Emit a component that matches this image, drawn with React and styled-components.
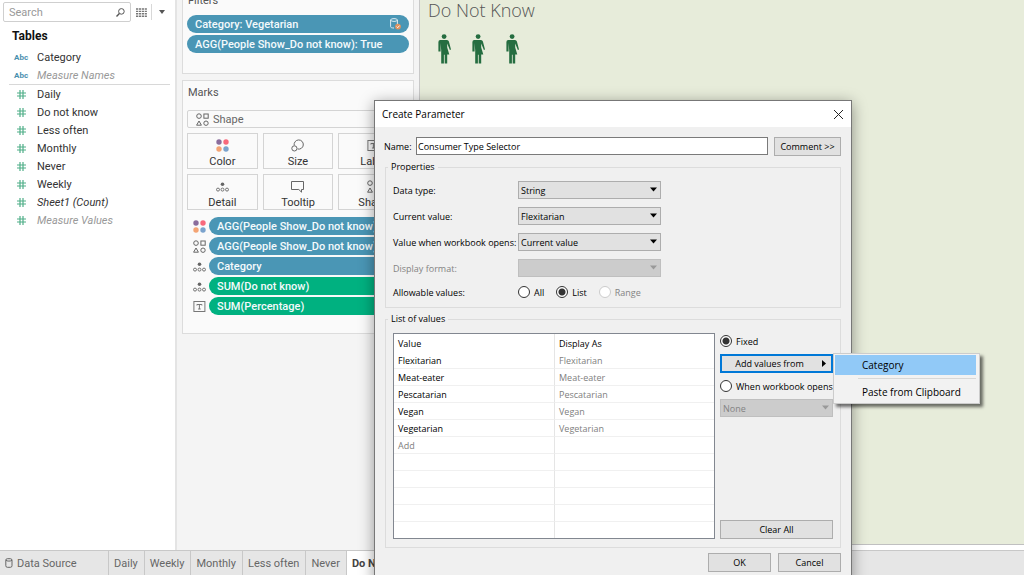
import React from "react";
import styled, { createGlobalStyle } from "styled-components";

const FONTS = {
  APP: 'Roboto, "Liberation Sans", sans-serif',
  SYSTEM: '"Open Sans", "Noto Sans", sans-serif',
};

const COLORS = {
  BLUE: "#4a96b5",
  GREEN: "#00b180",
  CANVAS: "#e7ecda",
  DIALOG: "#f0f0f0",
};

const GlobalStyle = createGlobalStyle`
  * {
    box-sizing: border-box;
  }
  body {
    margin: 0;
    overflow: hidden;
    font-family: ${FONTS.APP};
    font-size: 11px;
    color: #333;
  }
  button, input, select {
    margin: 0;
    font: inherit;
    color: inherit;
  }
`;

const Page = styled.div`
  position: relative;
  display: flex;
  flex-direction: column;
  height: 100vh;
  overflow: hidden;
`;

const Workspace = styled.div`
  display: flex;
  flex: 1;
  min-height: 0;
`;

/* data pane */

const DataPane = styled.aside`
  width: 177px;
  flex-shrink: 0;
  border-right: 2px solid #e4e4e4;
  background: #fff;
`;

const SearchRow = styled.div`
  display: flex;
  align-items: center;
  height: 24px;
  padding-left: 3px;
`;

const SearchBox = styled.label`
  display: flex;
  align-items: center;
  width: 128px;
  height: 20px;
  padding: 0 5px;
  border: 1px solid #cfcfcf;
  border-radius: 2px;
`;

const SearchInput = styled.input`
  flex: 1;
  min-width: 0;
  padding: 0;
  border: 0;
  outline: 0;
  background: none;
  &::placeholder {
    color: #999;
    opacity: 1;
  }
`;

const ToolButton = styled.button`
  display: flex;
  align-items: center;
  justify-content: center;
  width: 20px;
  height: 16px;
  padding: 0;
  border: 0;
  background: none;
  & + & {
    border-left: 1px solid #d8d8d8;
  }
`;

const PaneTitle = styled.h2`
  margin: 0;
  padding: 4px 12px;
  font-size: 12px;
  line-height: 16px;
  color: #111;
`;

const FieldList = styled.ul`
  margin: 0 5px 0 9px;
  padding: 0;
  list-style: none;
  & + & {
    border-top: 1px solid #d8d8d8;
  }
`;

const Field = styled.li`
  display: flex;
  align-items: center;
  height: 18px;
  color: ${({ $muted }) => ($muted ? "#999" : "#333")};
  font-style: ${({ $italic }) => ($italic ? "italic" : "normal")};
`;

const FieldType = styled.span`
  display: flex;
  width: 28px;
  padding-left: ${({ $text }) => ($text ? 5 : 8)}px;
  font-size: 8px;
  font-weight: 700;
  font-style: normal;
  color: #4a8fae;
`;

/* shelves */

const Shelves = styled.section`
  display: flex;
  flex-direction: column;
  gap: 6px;
  width: 242px;
  flex-shrink: 0;
  margin-top: -12px;
  padding: 0 5px;
  background: #f4f4f4;
`;

const Card = styled.div`
  padding: 4px;
  border: 1px solid #dcdcdc;
  background: #fafafa;
`;

const FilterCard = styled(Card)`
  height: 86px;
`;

const MarksCard = styled(Card)`
  height: 254px;
`;

const CardTitle = styled.h3`
  margin: 0;
  padding: 0 1px;
  font-size: 11px;
  font-weight: 400;
  line-height: 16px;
  color: #555;
`;

const MarksTitle = styled(CardTitle)`
  padding-bottom: 9px;
`;

const PillList = styled.div`
  display: flex;
  flex-direction: column;
  gap: 2px;
  padding-top: 6px;
`;

const PillRow = styled.div`
  display: grid;
  grid-template-columns: 22px 1fr;
  align-items: center;
`;

const PillIcon = styled.span`
  display: flex;
  padding-left: 6px;
`;

const Pill = styled.div`
  display: flex;
  align-items: center;
  justify-content: space-between;
  height: 18px;
  padding: 0 8px;
  border-radius: 9px;
  background: ${({ $color }) => $color};
  font-weight: 500;
  color: #f4fafc;
  white-space: nowrap;
`;

const MarkType = styled.label`
  display: flex;
  align-items: center;
  gap: 4px;
  height: 18px;
  margin-bottom: 5px;
  padding-left: 8px;
  border: 1px solid #d4d4d4;
  border-radius: 2px;
`;

const MarkSelect = styled.select`
  flex: 1;
  padding: 0;
  border: 0;
  appearance: none;
  background: none;
  color: #666;
`;

const MarkGrid = styled.div`
  display: grid;
  grid-template-columns: repeat(3, 1fr);
  gap: 5px;
  padding-bottom: 1px;
`;

const MarkButton = styled.button`
  display: flex;
  flex-direction: column;
  align-items: center;
  justify-content: space-between;
  height: 36px;
  padding: 5px 0 0;
  border: 1px solid #d4d4d4;
  background: #fafafa;
  line-height: 13px;
`;

/* canvas */

const Canvas = styled.main`
  flex: 1;
  margin-bottom: 5px;
  padding: 0 8px;
  border-left: 1px solid #c8c8c8;
  border-bottom: 1px solid #c0c0c0;
  background: ${COLORS.CANVAS};
`;

const CanvasTitle = styled.h1`
  margin: 0;
  font-family: ${FONTS.SYSTEM};
  font-size: 18px;
  font-weight: 300;
  line-height: 20px;
  color: #555;
`;

const People = styled.div`
  display: flex;
  gap: 20px;
  padding: 14px 10px;
`;

/* sheet tabs */

const TabBar = styled.nav`
  display: flex;
  height: 25px;
  border-top: 1px solid #c8c8c8;
  background: #e6e6e6;
`;

const Tab = styled.a`
  display: flex;
  align-items: center;
  gap: 4px;
  padding: 0 6px 0 5px;
  border-right: 1px solid #c8c8c8;
  background: ${({ $active }) => ($active ? "#fff" : "transparent")};
  font-weight: ${({ $active }) => ($active ? 700 : 400)};
  color: ${({ $active }) => ($active ? "#444" : "#666")};
  text-decoration: none;
  white-space: nowrap;
`;

const SourceTab = styled(Tab)`
  width: 109px;
`;

/* dialog */

const Dialog = styled.div`
  position: absolute;
  top: 100px;
  left: 374px;
  width: 478px;
  border: 1px solid #777;
  background: ${COLORS.DIALOG};
  box-shadow: 0 3px 14px rgba(0, 0, 0, 0.4);
  font-family: ${FONTS.SYSTEM};
  font-size: 9px;
  font-weight: 500;
  color: #000;
`;

const TitleBar = styled.header`
  display: flex;
  align-items: center;
  justify-content: space-between;
  height: 26px;
  padding: 0 7px;
  background: #fff;
  font-size: 10px;
  font-weight: 400;
`;

const CloseButton = styled.button`
  display: flex;
  padding: 0;
  border: 0;
  background: none;
`;

const Form = styled.form`
  padding: 10px 10px 10px 9px;
`;

const NameRow = styled.div`
  display: flex;
  align-items: center;
  height: 18px;
  margin-bottom: 5px;
`;

const NameLabel = styled.label`
  width: 32px;
`;

const NameInput = styled.input`
  flex: 1;
  min-width: 0;
  height: 18px;
  margin-right: 6px;
  padding: 0 1px;
  border: 1px solid #7a7a7a;
  background: #fff;
`;

const Button = styled.button`
  position: relative;
  height: 19px;
  padding: 0;
  width: ${({ $width }) => $width || "100%"};
  border: ${({ $focused }) => ($focused ? "2px solid #0078d7" : "1px solid #adadad")};
  background: #e1e1e1;
`;

const Group = styled.fieldset`
  min-width: 0;
  margin: 0 0 4px 1px;
  padding: 7px 7px 8px;
  border: 1px solid #dcdcdc;
`;

const Legend = styled.legend`
  margin-left: -5px;
  padding: 0 3px;
  line-height: 14px;
`;

const FormRow = styled.div`
  display: grid;
  grid-template-columns: 125px 143px;
  align-items: center;
  height: 18px;
  margin-bottom: 8px;
  white-space: nowrap;
  color: ${({ $disabled }) => ($disabled ? "#838383" : "#000")};
`;

const RadioRow = styled.div`
  display: flex;
  align-items: center;
  height: 14px;
`;

const RadioCaption = styled.span`
  width: 125px;
`;

const SelectBox = styled.div`
  position: relative;
  width: 100%;
`;

const Select = styled.select`
  display: block;
  width: 100%;
  height: 18px;
  padding: 0 2px;
  border: 1px solid #adadad;
  border-radius: 0;
  appearance: none;
  background: #e1e1e1;
  opacity: 1;
  &:disabled {
    border-color: #bfbfbf;
    background: #ccc;
    color: #838383;
  }
`;

const Arrow = styled.svg`
  position: absolute;
  top: 6px;
  right: 4px;
  pointer-events: none;
`;

const RadioLabel = styled.label`
  display: flex;
  align-items: center;
  gap: 4px;
  height: 14px;
  margin-right: 12px;
  white-space: nowrap;
  color: ${({ $disabled }) => ($disabled ? "#838383" : "#000")};
`;

const RadioInput = styled.input`
  width: 12px;
  height: 12px;
  flex-shrink: 0;
  border: 1px solid #333;
  border-radius: 50%;
  appearance: none;
  background: #fff;
  &:checked {
    background: radial-gradient(circle, #333 0 3px, #fff 4px);
  }
  &:disabled {
    border-color: #ccc;
  }
`;

const ListLayout = styled.div`
  display: grid;
  grid-template-columns: 1fr 113px;
  gap: 5px;
`;

const ValueFrame = styled.div`
  height: 206px;
  overflow: hidden;
  border: 1px solid #828790;
  background: #fff;
`;

const ValueTable = styled.table`
  width: 100%;
  border-collapse: separate;
  border-spacing: 0;
  table-layout: fixed;
`;

const HeadCell = styled.th`
  height: 18px;
  padding: 0 4px;
  font-weight: 500;
  text-align: left;
  & + & {
    border-left: 1px solid #e5e5e5;
  }
`;

const ValueCell = styled.td`
  height: 17px;
  padding: 2px 4px 0;
  border-bottom: 1px solid #f0f0f0;
  line-height: 14px;
  color: ${({ $muted }) => ($muted ? "#808080" : "#000")};
  & + & {
    border-left: 1px solid #e5e5e5;
  }
`;

const SideColumn = styled.div`
  display: flex;
  flex-direction: column;
  justify-content: space-between;
  min-width: 0;
`;

const SideGroup = styled.div`
  display: flex;
  flex-direction: column;
  gap: 6px;
  padding-top: 1px;
`;

const MenuAnchor = styled.div`
  position: relative;
  display: flex;
`;

const ButtonArrow = styled.svg`
  position: absolute;
  top: 4px;
  right: 5px;
`;

const AddButton = styled(Button)`
  padding-right: 14px;
`;

const Menu = styled.div`
  position: absolute;
  top: -1px;
  left: 100%;
  width: 147px;
  padding: 1px 3px 1px 1px;
  border: 1px solid #ccc;
  background: #f2f2f2;
  box-shadow: 3px 3px 3px rgba(0, 0, 0, 0.55);
  font-size: 10px;
  font-weight: 400;
`;

const MenuItem = styled.button`
  display: block;
  width: 100%;
  height: 20px;
  padding: 0 0 0 27px;
  border: 0;
  background: ${({ $active }) => ($active ? "#91c9f7" : "transparent")};
  text-align: left;
  white-space: nowrap;
`;

const MenuLine = styled.div`
  height: 1px;
  margin: 3px 0 3px 23px;
  background: #d7d7d7;
`;

const Footer = styled.div`
  display: flex;
  justify-content: flex-end;
  gap: 7px;
  padding-top: 1px;
`;

/* icons */

const ColorIcon = () => (
  <svg width="13" height="13" viewBox="0 0 13 13">
    <circle cx="3" cy="3" r="2.7" fill="#8a6d9c" />
    <circle cx="10" cy="3" r="2.7" fill="#f8697c" />
    <circle cx="3" cy="10" r="2.7" fill="#f4a474" />
    <circle cx="10" cy="10" r="2.7" fill="#7ba3cd" />
  </svg>
);

const ShapeIcon = () => (
  <svg width="13" height="13" viewBox="0 0 13 13" fill="none" stroke="#666">
    <circle cx="3" cy="3.1" r="2.3" />
    <rect x="7.9" y="1" width="4.3" height="4.2" />
    <path d="M3 8L5.4 12.2H0.6Z" />
    <circle cx="10" cy="10.2" r="2.2" />
  </svg>
);

const DetailIcon = () => (
  <svg width="13" height="13" viewBox="0 0 13 13" fill="none" stroke="#666">
    <circle cx="6.5" cy="4.3" r="1.8" fill="#666" stroke="none" />
    <circle cx="2" cy="9.6" r="1.5" strokeWidth="0.9" />
    <circle cx="6.5" cy="9.6" r="1.5" strokeWidth="0.9" />
    <circle cx="11" cy="9.6" r="1.5" strokeWidth="0.9" />
  </svg>
);

const SizeIcon = () => (
  <svg width="13" height="13" viewBox="0 0 13 13" fill="none" stroke="#666">
    <path d="M3.2 6.4A4.6 4.6 0 1 1 6.6 10" />
    <circle cx="3.4" cy="9.4" r="2.6" />
  </svg>
);

const TooltipIcon = () => (
  <svg width="13" height="13" viewBox="0 0 13 13" fill="none" stroke="#666">
    <path d="M0.5 1.5H12.5V9.5H10.5V12.2L7.8 9.5H0.5Z" />
  </svg>
);

const LabelIcon = () => (
  <svg width="13" height="13" viewBox="0 0 13 13" fill="none" stroke="#777">
    <rect x="0.9" y="1.5" width="11" height="10" />
    <path d="M3.9 5.5V4.5H8.9V5.5M6.4 4.5V9M5.1 9H7.7" />
  </svg>
);

const HashIcon = () => (
  <svg width="9" height="9" viewBox="0 0 9 9" fill="none" stroke="#4fae88" strokeWidth="1.2">
    <path d="M3 0V9M6 0V9M0 3H9M0 6H9" />
  </svg>
);

const SearchIcon = () => (
  <svg width="9" height="9" viewBox="0 0 9 9" fill="none" stroke="#555">
    <circle cx="5.4" cy="3.4" r="2.8" />
    <path d="M3.4 5.5L0.5 8.5" strokeWidth="1.4" />
  </svg>
);

const GridIcon = () => (
  <svg width="11" height="9" viewBox="0 0 11 9" stroke="#777" strokeWidth="1.4">
    <path
      d="M0 1H11M0 3.4H11M0 5.8H11M0 8.2H11"
      strokeDasharray="2.2 0.7"
    />
  </svg>
);

const CaretIcon = () => (
  <svg width="6" height="4" viewBox="0 0 6 4">
    <path d="M0 0H6L3 4Z" fill="#555" />
  </svg>
);

const FilterSourceIcon = () => (
  <svg width="11" height="12" viewBox="0 0 11 12" fill="none" stroke="#dcebf2">
    <ellipse cx="4" cy="2" rx="3.4" ry="1.4" />
    <path d="M0.6 2V8.6C0.6 9.6 2 10 4 10M7.4 2V6" />
    <circle cx="8" cy="8.6" r="2.9" fill="#e0935f" stroke="none" />
    <path d="M6.6 8.6L7.7 9.7L9.5 7.6" stroke="#fff" strokeWidth="0.9" />
  </svg>
);

const DatabaseIcon = () => (
  <svg width="8" height="10" viewBox="0 0 8 10" fill="none" stroke="#666">
    <rect x="0.8" y="0.7" width="6.2" height="8.6" rx="1.6" />
    <path d="M0.8 2.2C2 3.4 5.8 3.4 7 2.2" />
  </svg>
);

const CloseIcon = () => (
  <svg width="11" height="11" viewBox="0 0 11 11" stroke="#222">
    <path d="M1 1L10 10M10 1L1 10" />
  </svg>
);

const PersonIcon = () => (
  <svg width="14" height="30" viewBox="0 0 14 30" fill="#256d40">
    <circle cx="6.1" cy="2.6" r="2.4" />
    <path d="M2.2 6H9Q10.4 6 10.9 7.6L13 15.4L11.9 16L9.2 9.4V13.4L11.3 20.6H9.2V29.4H6.7V20.8H5.9V29.4H3.2V16.4L2.6 9V17.4H0.4V8Q0.5 6.1 2.2 6Z" />
  </svg>
);

const DIMENSIONS = [{ name: "Category" }, { name: "Measure Names", generated: true }];

const MEASURES = [
  { name: "Daily" },
  { name: "Do not know" },
  { name: "Less often" },
  { name: "Monthly" },
  { name: "Never" },
  { name: "Weekly" },
  { name: "Sheet1 (Count)", italic: true },
  { name: "Measure Values", italic: true, muted: true },
];

const MARK_BUTTONS = [
  { label: "Color", Icon: ColorIcon },
  { label: "Size", Icon: SizeIcon },
  { label: "Label", Icon: LabelIcon },
  { label: "Detail", Icon: DetailIcon },
  { label: "Tooltip", Icon: TooltipIcon },
  { label: "Shape", Icon: ShapeIcon },
];

const MARK_PILLS = [
  { label: "AGG(People Show_Do not know)", color: COLORS.BLUE, Icon: ColorIcon },
  { label: "AGG(People Show_Do not know)", color: COLORS.BLUE, Icon: ShapeIcon },
  { label: "Category", color: COLORS.BLUE, Icon: DetailIcon },
  { label: "SUM(Do not know)", color: COLORS.GREEN, Icon: DetailIcon },
  { label: "SUM(Percentage)", color: COLORS.GREEN, Icon: LabelIcon },
];

const SHEETS = ["Daily", "Weekly", "Monthly", "Less often", "Never", "Do Not Know"];

const VALUES = ["Flexitarian", "Meat-eater", "Pescatarian", "Vegan", "Vegetarian"];

const EMPTY_ROWS = [1, 2, 3, 4, 5];

function Dropdown({ id, value, disabled, label }) {
  return (
    <SelectBox>
      <Select id={id} disabled={disabled} defaultValue={value} aria-label={label}>
        <option value={value}>{value}</option>
      </Select>
      <Arrow width="7" height="5" viewBox="0 0 7 5">
        <path d="M0 0.5H7L3.5 4.5Z" fill={disabled ? "#999" : "#000"} />
      </Arrow>
    </SelectBox>
  );
}

function Radio({ name, label, checked, disabled }) {
  return (
    <RadioLabel $disabled={disabled}>
      <RadioInput type="radio" name={name} defaultChecked={checked} disabled={disabled} />
      {label}
    </RadioLabel>
  );
}

function Sidebar() {
  return (
    <DataPane>
      <SearchRow>
        <SearchBox>
          <SearchInput type="text" placeholder="Search" aria-label="Search" />
          <SearchIcon />
        </SearchBox>
        <ToolButton type="button" aria-label="View data">
          <GridIcon />
        </ToolButton>
        <ToolButton type="button" aria-label="Options">
          <CaretIcon />
        </ToolButton>
      </SearchRow>
      <PaneTitle>Tables</PaneTitle>
      <FieldList>
        {DIMENSIONS.map(({ name, generated }) => (
          <Field key={name} $muted={generated} $italic={generated}>
            <FieldType $text>Abc</FieldType>
            {name}
          </Field>
        ))}
      </FieldList>
      <FieldList>
        {MEASURES.map(({ name, italic, muted }) => (
          <Field key={name} $muted={muted} $italic={italic}>
            <FieldType>
              <HashIcon />
            </FieldType>
            {name}
          </Field>
        ))}
      </FieldList>
    </DataPane>
  );
}

function ShelfColumn() {
  return (
    <Shelves>
      <FilterCard>
        <CardTitle>Filters</CardTitle>
        <PillList>
          <Pill $color={COLORS.BLUE}>
            Category: Vegetarian
            <FilterSourceIcon />
          </Pill>
          <Pill $color={COLORS.BLUE}>AGG(People Show_Do not know): True</Pill>
        </PillList>
      </FilterCard>
      <MarksCard>
        <MarksTitle>Marks</MarksTitle>
        <MarkType>
          <ShapeIcon />
          <MarkSelect defaultValue="Shape" aria-label="Mark type">
            <option>Shape</option>
          </MarkSelect>
        </MarkType>
        <MarkGrid>
          {MARK_BUTTONS.map(({ label, Icon }) => (
            <MarkButton key={label} type="button">
              <Icon />
              {label}
            </MarkButton>
          ))}
        </MarkGrid>
        <PillList>
          {MARK_PILLS.map(({ label, color, Icon }, index) => (
            <PillRow key={index}>
              <PillIcon>
                <Icon />
              </PillIcon>
              <Pill $color={color}>{label}</Pill>
            </PillRow>
          ))}
        </PillList>
      </MarksCard>
    </Shelves>
  );
}

function ParameterDialog() {
  return (
    <Dialog role="dialog" aria-labelledby="dialog-title">
      <TitleBar>
        <span id="dialog-title">Create Parameter</span>
        <CloseButton type="button" aria-label="Close">
          <CloseIcon />
        </CloseButton>
      </TitleBar>
      <Form>
        <NameRow>
          <NameLabel htmlFor="name">Name:</NameLabel>
          <NameInput id="name" type="text" defaultValue="Consumer Type Selector" />
          <Button type="button" $width="67px">
            Comment &gt;&gt;
          </Button>
        </NameRow>
        <Group>
          <Legend>Properties</Legend>
          <FormRow>
            <label htmlFor="data-type">Data type:</label>
            <Dropdown id="data-type" value="String" />
          </FormRow>
          <FormRow>
            <label htmlFor="current-value">Current value:</label>
            <Dropdown id="current-value" value="Flexitarian" />
          </FormRow>
          <FormRow>
            <label htmlFor="open-value">Value when workbook opens:</label>
            <Dropdown id="open-value" value="Current value" />
          </FormRow>
          <FormRow $disabled>
            <label htmlFor="format">Display format:</label>
            <Dropdown id="format" value="" disabled />
          </FormRow>
          <RadioRow>
            <RadioCaption>Allowable values:</RadioCaption>
            <Radio name="allowable" label="All" />
            <Radio name="allowable" label="List" checked />
            <Radio name="allowable" label="Range" disabled />
          </RadioRow>
        </Group>
        <Group>
          <Legend>List of values</Legend>
          <ListLayout>
            <ValueFrame>
              <ValueTable>
                <thead>
                  <tr>
                    <HeadCell>Value</HeadCell>
                    <HeadCell>Display As</HeadCell>
                  </tr>
                </thead>
                <tbody>
                  {VALUES.map((value) => (
                    <tr key={value}>
                      <ValueCell>{value}</ValueCell>
                      <ValueCell $muted>{value}</ValueCell>
                    </tr>
                  ))}
                  <tr>
                    <ValueCell $muted>Add</ValueCell>
                    <ValueCell />
                  </tr>
                  {EMPTY_ROWS.map((row) => (
                    <tr key={row}>
                      <ValueCell />
                      <ValueCell />
                    </tr>
                  ))}
                </tbody>
              </ValueTable>
            </ValueFrame>
            <SideColumn>
              <SideGroup>
                <Radio name="source" label="Fixed" checked />
                <MenuAnchor>
                  <AddButton type="button" $focused>
                    Add values from
                    <ButtonArrow width="4" height="7" viewBox="0 0 4 7">
                      <path d="M0 0L4 3.5L0 7Z" />
                    </ButtonArrow>
                  </AddButton>
                  <Menu role="menu">
                    <MenuItem type="button" role="menuitem" $active>
                      Category
                    </MenuItem>
                    <MenuLine />
                    <MenuItem type="button" role="menuitem">
                      Paste from Clipboard
                    </MenuItem>
                  </Menu>
                </MenuAnchor>
                <Radio name="source" label="When workbook opens" />
                <Dropdown label="Source field" value="None" disabled />
              </SideGroup>
              <Button type="button">Clear All</Button>
            </SideColumn>
          </ListLayout>
        </Group>
        <Footer>
          <Button type="submit" $width="63px">
            OK
          </Button>
          <Button type="button" $width="63px">
            Cancel
          </Button>
        </Footer>
      </Form>
    </Dialog>
  );
}

function App() {
  return (
    <Page>
      <GlobalStyle />
      <Workspace>
        <Sidebar />
        <ShelfColumn />
        <Canvas>
          <CanvasTitle>Do Not Know</CanvasTitle>
          <People>
            <PersonIcon />
            <PersonIcon />
            <PersonIcon />
          </People>
        </Canvas>
      </Workspace>
      <TabBar>
        <SourceTab href="#source">
          <DatabaseIcon />
          Data Source
        </SourceTab>
        {SHEETS.map((sheet) => (
          <Tab key={sheet} href="#sheet" $active={sheet === "Do Not Know"}>
            {sheet}
          </Tab>
        ))}
      </TabBar>
      <ParameterDialog />
    </Page>
  );
}

export default App;
